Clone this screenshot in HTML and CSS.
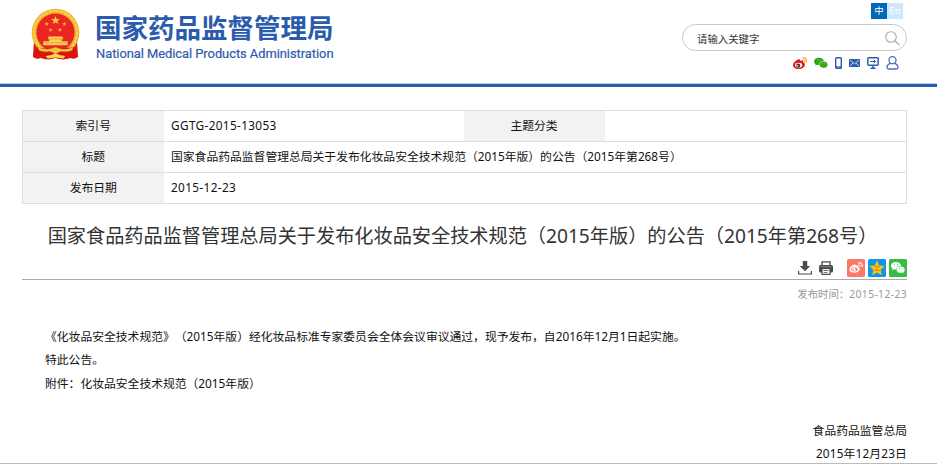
FILE: index.html
```html
<!DOCTYPE html>
<html lang="zh-CN">
<head>
    <meta charset="UTF-8">
    <meta name="viewport" content="width=device-width, initial-scale=1.0">
    <title>国家食品药品监督管理总局关于发布化妆品安全技术规范（2015年版）的公告（2015年第268号）</title>
    <link rel="stylesheet" href="styles.css">
</head>
<body>
    <header class="header">
        <div class="logo">
            <svg class="emblem" viewBox="0 0 50 54">
                <path d="M3 35 L2 50 Q6 53 10 51 Q17 54 25 51 Q33 54 40 51 Q44 53 48 50 L47 35Z" fill="#d8150f"/>
                <circle cx="25" cy="25" r="24.3" fill="#efb52d"/>
                <circle cx="25" cy="25" r="22" fill="none" stroke="#f8d45b" stroke-width="2" stroke-dasharray="3 1"/>
                <circle cx="25" cy="25" r="19.5" fill="#ec2523"/>
                <path d="M25 8l1.1 3.2h3.4l-2.7 2 1 3.2-2.8-2-2.8 2 1-3.2-2.7-2h3.4z" fill="#fbcf3d"/>
                <g fill="#f5b63b">
                    <path id="star" d="M16 14l.6 1.6h1.6l-1.3 1 .5 1.6-1.4-1-1.4 1 .5-1.6-1.3-1h1.6z"/>
                    <use href="#star" x="18"/>
                    <use href="#star" x="4" y="6"/>
                    <use href="#star" x="13.500" y="6"/>
                </g>
                <path d="M18 29h14l1 2.500h-1.500v2.500h6v4H12.500v-4h6v-2.500H17z" fill="#f8cf52"/>
                <path d="M17 31.500h16M13 35.500h24" stroke="#e78b2c" stroke-width=".6"/>
                <path d="M5 40q10 2 20 1.500t20-1.500l2 10q-10 2-22 1T3 50z" fill="#d8150f"/>
                <path d="M7 40q7 3 13 1.500l5-1.500 5 1.500q6 1.500 13-1.500l-1 3q-6 2.500-11 1l-6 2.500-6-2.500q-5 1.500-11-1z" fill="#f2c33f"/>
                <path d="M15 49l6-1 4-2 4 2 6 1-2 2.500-8-1-8 1z" fill="#f8d45b"/>
            </svg>
            <div class="logo-text">
                <div class="logo-cn">国家药品监督管理局</div>
                <div class="logo-en">National Medical Products Administration</div>
            </div>
        </div>
        <div class="tools">
            <div class="lang"><span class="lang-cn">中</span><span class="lang-en">En</span></div>
            <div class="search">
                <span>请输入关键字</span>
                <svg class="search-icon" viewBox="0 0 15 15" fill="none" stroke="#aaa" stroke-width="1.1"><circle cx="6" cy="6" r="5.300"/><path d="M10 10l4.500 4"/></svg>
            </div>
            <div class="links">
                <svg width="14" height="13" viewBox="0 0 14 13">
                    <path d="M5.500 2.500c1-.5 2 0 1.600 1.400 2-.8 3.400-.3 3 1.400 1.300.5 2 1.300 1.700 2.700-.4 2.500-3.200 4-6.200 4C2.600 12 0 10.600 0 8.200c0-2.300 3.200-5 5.500-5.700z" fill="#e50f1b"/>
                    <ellipse cx="5.600" cy="8.200" rx="3.600" ry="2.400" fill="#fff"/>
                    <circle cx="5.200" cy="8.400" r="2" fill="#333"/>
                    <circle cx="4.600" cy="8.800" r=".7" fill="#fff"/>
                    <path d="M9.300 1.100c3-.7 5 1.500 4.100 4.500M9.500 3.200c1.500-.3 2.500.8 2.100 2" fill="none" stroke="#f5a623" stroke-width="1.300"/>
                </svg>
                <svg width="14" height="12" viewBox="0 0 15 12">
                    <path d="M5.300.3C2.300.3 0 2 0 4.300c0 1.300.7 2.400 1.800 3.100L1.500 9l1.800-1c.7.200 1.300.3 2 .3 3 0 5.300-1.800 5.300-4S8.300.3 5.300.3z" fill="#35a316"/>
                    <path d="M10.300 4.200c-2.600 0-4.600 1.500-4.600 3.600s2 3.600 4.600 3.600c.6 0 1.200-.1 1.700-.3l1.600.8-.4-1.400c1-.7 1.600-1.600 1.600-2.700 0-2.100-2-3.600-4.500-3.600z" fill="#35a316" stroke="#fff" stroke-width=".6"/>
                    <path d="M3.500 3h.9M6.300 3h.9M8.500 6.800h.8M11.300 6.800h.8" stroke="#fff" stroke-width=".7"/>
                </svg>
                <svg width="7" height="12" viewBox="0 0 7 12"><rect x=".7" y=".7" width="5.600" height="10.600" rx=".8" fill="#fff" stroke="#2e5cad" stroke-width="1.400"/><path d="M1 10h5" stroke="#2e5cad" stroke-width="1.500"/><path d="M3 10h1" stroke="#fff" stroke-width=".8"/></svg>
                <svg width="11" height="8" viewBox="0 0 11 8"><rect width="11" height="8" rx=".6" fill="#2e5cad"/><path d="M1 1.200l4.500 3.500L10 1.200M1 7l3-3M10 7L7 4" fill="none" stroke="#fff" stroke-width=".7"/></svg>
                <svg width="12" height="12" viewBox="0 0 12 12" fill="none" stroke="#2e5cad"><rect x=".8" y=".8" width="10.400" height="7.400" rx="1" stroke-width="1.500"/><path d="M3 4.500h5.500M6.700 2.800l1.800 1.700-1.800 1.700" stroke-width="1"/><path d="M6 8v3M3.500 11.200h5" stroke-width="1.400"/></svg>
                <svg width="13" height="14" viewBox="0 0 13 14" fill="none" stroke="#4d70b7" stroke-width="1.300"><circle cx="6.500" cy="4.200" r="3.500"/><path d="M4.500 7.200Q1 8.600 1 11.500q0 1.500 1.500 1.500h8q1.500 0 1.500-1.500Q12 8.600 8.500 7.200"/></svg>
            </div>
        </div>
    </header>

    <main class="content">
        <table class="info">
            <tr>
                <th>索引号</th>
                <td class="code">GGTG-2015-13053</td>
                <th>主题分类</th>
                <td class="last"></td>
            </tr>
            <tr>
                <th>标题</th>
                <td colspan="3">国家食品药品监督管理总局关于发布化妆品安全技术规范（2015年版）的公告（2015年第268号）</td>
            </tr>
            <tr>
                <th>发布日期</th>
                <td colspan="3" class="date">2015-12-23</td>
            </tr>
        </table>

        <h1 class="title">国家食品药品监督管理总局关于发布化妆品安全技术规范（2015年版）的公告（2015年第268号）</h1>

        <div class="share">
            <svg width="14" height="14" viewBox="0 0 14 14" fill="#4b4b4b"><path d="M4.800 0h4.400v5h3L7 10.300 1.800 5h3z"/><path d="M.6 10v3h12.800v-3" fill="none" stroke="#4b4b4b" stroke-width="1.200"/></svg>
            <svg class="print" width="14" height="14" viewBox="0 0 14 14"><path d="M3 4V.8h8V4" fill="#fff" stroke="#4b4b4b" stroke-width="1.300"/><rect y="4" width="14" height="7.500" rx="1.500" fill="#4b4b4b"/><rect x="3" y="7.500" width="8" height="5.900" fill="#fff" stroke="#4b4b4b" stroke-width="1.200"/><path d="M4.500 9.500h5M4.500 11.500h4" stroke="#4b4b4b" stroke-width=".8"/><path d="M1.500 5.700h11" stroke="#aaa" stroke-width=".6"/></svg>
            <svg width="18" height="18" viewBox="0 0 18 18">
                <rect width="18" height="18" rx="1.500" fill="#f77a6b"/>
                <path d="M7.300 5.600c1-.3 1.800.2 1.500 1.200 1.600-.5 2.700-.1 2.400 1.200 1.100.4 1.700 1 1.500 2.200-.3 2.200-2.600 3.500-5.200 3.500-2.700 0-5-1.100-5-3.200 0-2 2.700-4.400 4.800-4.900z" fill="#fff"/>
                <ellipse cx="7.400" cy="10.300" rx="3.200" ry="2.100" fill="#f77a6b"/>
                <circle cx="7" cy="10.500" r="1.700" fill="#fff"/>
                <circle cx="6.600" cy="10.800" r=".6" fill="#f77a6b"/>
                <path d="M11 4c2.900-.7 5 1.400 4.200 4.200M11.300 6c1.300-.3 2.200.6 1.900 1.700" fill="none" stroke="#fff" stroke-width="1.100"/>
            </svg>
            <svg width="18" height="18" viewBox="0 0 18 18">
                <rect width="18" height="18" rx="1.500" fill="#1296e4"/>
                <path d="M9 1.500l2.200 5 5.500.6-4.100 3.700 1.200 5.500L9 13.500l-4.800 2.800 1.200-5.500L1.300 7.100l5.500-.6z" fill="#fcc513"/>
                <path d="M6 7.300h5.500L7 11.500h5" fill="none" stroke="#e18507"/>
            </svg>
            <svg width="18" height="18" viewBox="0 0 18 18">
                <rect width="18" height="18" rx="1.500" fill="#38bd43"/>
                <path d="M7 3C4.100 3 2 4.700 2 6.800c0 1.200.7 2.200 1.700 2.900L3.300 11.300l1.900-1c.6.200 1.200.2 1.800.2 2.900 0 5-1.700 5-3.700S9.900 3 7 3z" fill="#fff"/>
                <path d="M11.700 7.300c-2.500 0-4.400 1.400-4.400 3.400s1.900 3.400 4.400 3.400c.5 0 1-.1 1.500-.2l1.700.9-.4-1.500c.9-.6 1.500-1.500 1.500-2.600 0-2-1.900-3.400-4.300-3.400z" fill="#fff" stroke="#38bd43" stroke-width=".6"/>
                <path d="M5 5.800h1M8 5.800h1M10 9.800h1M12.500 9.800h1" stroke="#38bd43"/>
            </svg>
        </div>
        <div class="publish">发布时间：<span class="date">2015-12-23</span></div>

        <article class="article">
            <p>《化妆品安全技术规范》（2015年版）经化妆品标准专家委员会全体会议审议通过，现予发布，自2016年12月1日起实施。</p>
            <p>特此公告。</p>
            <p>附件：化妆品安全技术规范（2015年版）</p>
            <p class="sign first">食品药品监管总局</p>
            <p class="sign sign-date">2015年12月23日</p>
        </article>
    </main>
    <footer class="footer"></footer>
</body>
</html>
```
FILE: styles.css
```css
* {
    box-sizing: border-box;
}
body {
    margin: 0;
    height: 464px;
    overflow: hidden;
    display: flex;
    flex-direction: column;
    background-color: #fff;
    color: #111;
    font-family: "Noto Sans", "Noto Sans CJK SC", sans-serif;
    font-size: 11.8px;
    text-spacing-trim: space-all;
}
svg {
    display: block;
    flex: none;
}
.header {
    height: 87px;
    flex: none;
    display: flex;
    justify-content: space-between;
    padding: 0 30px 0 31px;
    border-bottom: 3px solid #2b5bac;
    box-shadow: inset 0 -1px #c3d0e7;
}
.logo {
    display: flex;
    padding-top: 8px;
}
.emblem {
    width: 49px;
    height: 53px;
}
.logo-text {
    margin-left: 15px;
    color: #2b5bac;
    white-space: nowrap;
}
.logo-cn {
    margin-top: 2px;
    font-size: 26.5px;
    line-height: 37px;
    font-weight: 700;
}
.logo-en {
    font-family: Roboto, sans-serif;
    font-size: 12.9px;
    font-weight: 400;
    line-height: 14px;
    letter-spacing: -0.04px;
    padding-left: 1px;
    -webkit-text-stroke: 0.2px #2b5bac;
}
.tools {
    display: flex;
    flex-direction: column;
    align-items: flex-end;
    padding-top: 3px;
}
.lang {
    display: flex;
    margin-right: 4px;
    font-size: 9.5px;
    line-height: 16px;
    text-align: center;
    color: #fff;
}
.lang span {
    width: 16px;
    height: 16px;
}
.lang-cn {
    background-color: #0068b7;
}
.lang-en {
    background-color: #cce8ff;
}
.search {
    width: 225px;
    height: 27px;
    margin-top: 5px;
    padding: 1px 6px 0 14px;
    display: flex;
    align-items: center;
    justify-content: space-between;
    border: 1px solid #c8c8c8;
    border-radius: 14px;
    font-size: 10.4px;
    color: #333;
}
.search-icon {
    width: 15px;
    height: 15px;
}
.links {
    display: flex;
    align-items: center;
    gap: 7px;
    height: 14px;
    margin: 5px 8px 0 0;
}
.content {
    padding: 23px 30px 0 22px;
    flex: 1;
    min-height: 0;
}
.info {
    width: 885px;
    table-layout: fixed;
    border-collapse: collapse;
    border: 1px solid #dedede;
}
.info tr {
    height: 31px;
    border-bottom: 1px solid #dedede;
}
.info th,
.info td {
    padding: 0 7px 2px;
    line-height: 20px;
    text-align: left;
    font-weight: 400;
}
.info td {
    padding-left: 7.5px;
}
.info th {
    width: 141px;
    background-color: #f2f2f2;
    text-align: center;
}
.info .code {
    width: 300px;
}
.code,
.date {
    letter-spacing: 0.35px;
}
.title {
    margin: 16px 4px 0 0;
    text-align: center;
    font-size: 19.2px;
    font-weight: 400;
    line-height: 32px;
    letter-spacing: -0.02px;
    color: #333;
    white-space: nowrap;
}
.share {
    display: flex;
    align-items: center;
    justify-content: flex-end;
    height: 28px;
    gap: 3px;
    padding-top: 4px;
    border-bottom: 1px solid #aaa;
}
.share .print {
    margin: 0 11px 0 4px;
}
.publish {
    margin-top: 5px;
    text-align: right;
    font-size: 10.4px;
    line-height: 18px;
    color: #999;
}
.article {
    margin-top: 21.5px;
    padding-left: 23px;
}
.article p {
    margin: 0;
    line-height: 23.6px;
}
.article .sign {
    text-align: right;
}
.article .first {
    margin-top: 23.6px;
}
.article .sign-date {
    letter-spacing: 0.15px;
}
.footer {
    height: 1px;
    flex: none;
    background-color: #bbb;
}
```
